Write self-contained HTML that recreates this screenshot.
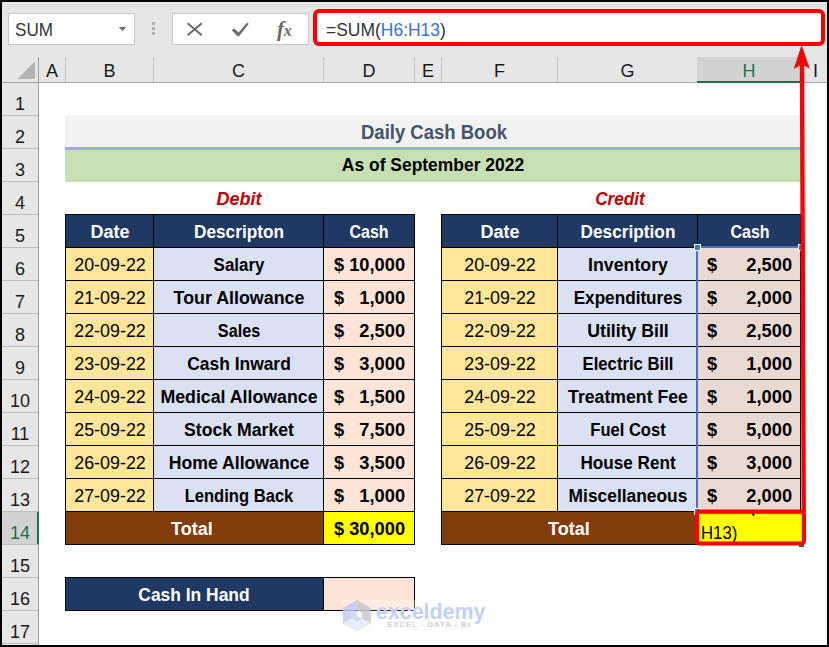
<!DOCTYPE html>
<html lang="en">
<head>
<meta charset="utf-8">
<title>Daily Cash Book</title>
<style>
html,body{margin:0;padding:0;background:#000;}
body{width:829px;height:647px;position:relative;overflow:hidden;font-family:"Liberation Sans",sans-serif;}
#win{position:absolute;left:0;top:0;width:829px;height:647px;overflow:hidden;}
#win div,#win span,#win svg{position:absolute;}
.t{white-space:nowrap;line-height:20px;height:20px;}
#chrome{left:2px;top:2px;width:825px;height:81px;background:#e6e6e6;}
#grid{left:39px;top:83px;width:788px;height:562px;background:#fff;}
#rowhdr{left:2px;top:83px;width:36px;height:562px;background:#e6e6e6;}
.rn{left:2px;width:36px;text-align:center;font-size:18px;line-height:20px;height:20px;color:#1a1a1a;}
.cl{top:60.76px;font-size:18px;line-height:20px;height:20px;color:#1a1a1a;transform:translateX(-50%);}
.vsep{top:57px;width:1px;height:25px;background:#c4c4c4;}
.hsep{left:2px;width:36px;height:1px;background:#bdbdbd;}
</style>
</head>
<body>
<div id="win">
<div id="chrome"></div>
<div id="grid"></div>
<div id="rowhdr"></div>
<div style="left:2px;top:2px;width:825px;height:7px;background:linear-gradient(#efefef 0,#e9e9e9 14%,#dfdfdf 40%,#e6e6e6 100%);"></div>
<div style="left:8px;top:13px;width:125px;height:30px;background:#fff;border:1px solid #c6c6c6;"></div>
<span class="t" style="left:14.5px;top:19.76px;font-size:18px;color:#333;transform-origin:0 50%;transform:scaleX(0.95)">SUM</span>
<svg style="left:118px;top:27px" width="10" height="6" viewBox="0 0 10 6"><path d="M0.8 0 L8.2 0 L4.5 4.3 Z" fill="#6e6e6e"/></svg>
<div style="left:152px;top:22px;width:3px;height:3px;background:#b2b2b2;"></div>
<div style="left:152px;top:27px;width:3px;height:3px;background:#b2b2b2;"></div>
<div style="left:152px;top:32px;width:3px;height:3px;background:#b2b2b2;"></div>
<div style="left:172px;top:13px;width:135px;height:30px;background:#fff;border:1px solid #c6c6c6;"></div>
<svg style="left:186px;top:20px" width="18" height="18" viewBox="0 0 18 18"><path d="M1.6 3.2 L15.8 15.3 M15.8 3.2 L1.6 15.3" stroke="#6a6a6a" stroke-width="2" fill="none"/></svg>
<svg style="left:230px;top:20px" width="20" height="18" viewBox="0 0 20 18"><path d="M1.8 10.2 L4.2 8.6 L8.6 12.6 L17.2 2.6 L18.8 3.8 L9 16.2 L7.6 16.2 Z" fill="#6a6a6a"/></svg>
<span class="t" style="left:277px;top:18.5px;font-family:'Liberation Serif',serif;font-style:italic;font-weight:bold;font-size:21px;color:#686868;letter-spacing:-0.3px">f<span style="position:static;font-size:16px">x</span></span>
<div style="left:312.5px;top:8.5px;width:504.5px;height:29px;background:#fff;border:4px solid #fa0000;border-radius:6px;"></div>
<span class="t" style="left:326px;top:19.5px;font-size:18px;color:#333;transform-origin:0 50%;transform:scaleX(0.97)">=SUM(<span style="position:static;color:#3b6fd1">H6:H13</span>)</span>
<div style="left:2px;top:82px;width:825px;height:1px;background:#a6a6a6;"></div>
<div class="vsep" style="left:38px"></div>
<div class="vsep" style="left:65px"></div>
<div class="vsep" style="left:153px"></div>
<div class="vsep" style="left:323px"></div>
<div class="vsep" style="left:414px"></div>
<div class="vsep" style="left:441px"></div>
<div class="vsep" style="left:557px"></div>
<div class="vsep" style="left:697px"></div>
<div class="vsep" style="left:800px"></div>
<div style="left:697px;top:57px;width:104px;height:24px;background:#d2d2d2;"></div>
<div style="left:697px;top:81px;width:104px;height:2px;background:#1e7145;"></div>
<span class="cl" style="left:52.0px;color:#1a1a1a">A</span>
<span class="cl" style="left:109.5px;color:#1a1a1a">B</span>
<span class="cl" style="left:238.5px;color:#1a1a1a">C</span>
<span class="cl" style="left:369.0px;color:#1a1a1a">D</span>
<span class="cl" style="left:428.0px;color:#1a1a1a">E</span>
<span class="cl" style="left:499.5px;color:#1a1a1a">F</span>
<span class="cl" style="left:627.5px;color:#1a1a1a">G</span>
<span class="cl" style="left:749.0px;color:#1e7145">H</span>
<span class="cl" style="left:815.5px">I</span>
<svg style="left:17px;top:61px" width="19" height="19" viewBox="0 0 19 19"><path d="M18 0.5 L18 18 L0.5 18 Z" fill="#b2b2b2"/></svg>
<div style="left:38px;top:57px;width:1px;height:588px;background:#a0a0a0;"></div>
<div class="hsep" style="top:115px"></div>
<span class="rn" style="top:93.76px;">1</span>
<div class="hsep" style="top:148px"></div>
<span class="rn" style="top:126.76px;">2</span>
<div class="hsep" style="top:181px"></div>
<span class="rn" style="top:159.76px;">3</span>
<div class="hsep" style="top:214px"></div>
<span class="rn" style="top:192.76px;">4</span>
<div class="hsep" style="top:247px"></div>
<span class="rn" style="top:225.76px;">5</span>
<div class="hsep" style="top:280px"></div>
<span class="rn" style="top:258.76px;">6</span>
<div class="hsep" style="top:313px"></div>
<span class="rn" style="top:291.76px;">7</span>
<div class="hsep" style="top:346px"></div>
<span class="rn" style="top:324.76px;">8</span>
<div class="hsep" style="top:379px"></div>
<span class="rn" style="top:357.76px;">9</span>
<div class="hsep" style="top:412px"></div>
<span class="rn" style="top:390.76px;">10</span>
<div class="hsep" style="top:445px"></div>
<span class="rn" style="top:423.76px;">11</span>
<div class="hsep" style="top:478px"></div>
<span class="rn" style="top:456.76px;">12</span>
<div class="hsep" style="top:511px"></div>
<span class="rn" style="top:489.76px;">13</span>
<div style="left:2px;top:512px;width:36px;height:32px;background:#d2d2d2;"></div>
<div style="left:37px;top:512px;width:2px;height:32px;background:#1e7145;"></div>
<div class="hsep" style="top:544px"></div>
<span class="rn" style="top:522.76px;color:#1e7145;">14</span>
<div class="hsep" style="top:577px"></div>
<span class="rn" style="top:555.76px;">15</span>
<div class="hsep" style="top:610px"></div>
<span class="rn" style="top:588.76px;">16</span>
<div class="hsep" style="top:643px"></div>
<span class="rn" style="top:621.76px;">17</span>
<div style="left:65px;top:115px;width:736px;height:32px;background:#f2f2f2;"></div>
<div style="left:65px;top:147px;width:736px;height:3px;background:#97aede;"></div>
<div style="left:65px;top:150px;width:736px;height:32px;background:#c6e0b4;"></div>
<div style="left:65px;top:214px;width:350px;height:331px;background:#000;"></div>
<div style="left:66px;top:215px;width:87px;height:32px;background:#203864;"></div>
<div style="left:154px;top:215px;width:169px;height:32px;background:#203864;"></div>
<div style="left:324px;top:215px;width:90px;height:32px;background:#203864;"></div>
<div style="left:66px;top:248px;width:87px;height:32px;background:#ffe699;"></div>
<div style="left:154px;top:248px;width:169px;height:32px;background:#d9e1f2;"></div>
<div style="left:324px;top:248px;width:90px;height:32px;background:#fce4d6;"></div>
<div style="left:66px;top:281px;width:87px;height:32px;background:#ffe699;"></div>
<div style="left:154px;top:281px;width:169px;height:32px;background:#d9e1f2;"></div>
<div style="left:324px;top:281px;width:90px;height:32px;background:#fce4d6;"></div>
<div style="left:66px;top:314px;width:87px;height:32px;background:#ffe699;"></div>
<div style="left:154px;top:314px;width:169px;height:32px;background:#d9e1f2;"></div>
<div style="left:324px;top:314px;width:90px;height:32px;background:#fce4d6;"></div>
<div style="left:66px;top:347px;width:87px;height:32px;background:#ffe699;"></div>
<div style="left:154px;top:347px;width:169px;height:32px;background:#d9e1f2;"></div>
<div style="left:324px;top:347px;width:90px;height:32px;background:#fce4d6;"></div>
<div style="left:66px;top:380px;width:87px;height:32px;background:#ffe699;"></div>
<div style="left:154px;top:380px;width:169px;height:32px;background:#d9e1f2;"></div>
<div style="left:324px;top:380px;width:90px;height:32px;background:#fce4d6;"></div>
<div style="left:66px;top:413px;width:87px;height:32px;background:#ffe699;"></div>
<div style="left:154px;top:413px;width:169px;height:32px;background:#d9e1f2;"></div>
<div style="left:324px;top:413px;width:90px;height:32px;background:#fce4d6;"></div>
<div style="left:66px;top:446px;width:87px;height:32px;background:#ffe699;"></div>
<div style="left:154px;top:446px;width:169px;height:32px;background:#d9e1f2;"></div>
<div style="left:324px;top:446px;width:90px;height:32px;background:#fce4d6;"></div>
<div style="left:66px;top:479px;width:87px;height:32px;background:#ffe699;"></div>
<div style="left:154px;top:479px;width:169px;height:32px;background:#d9e1f2;"></div>
<div style="left:324px;top:479px;width:90px;height:32px;background:#fce4d6;"></div>
<div style="left:66px;top:512px;width:257px;height:32px;background:#833c0b;"></div>
<div style="left:324px;top:512px;width:90px;height:32px;background:#ffff00;"></div>
<div style="left:441px;top:214px;width:360px;height:331px;background:#000;"></div>
<div style="left:442px;top:215px;width:115px;height:32px;background:#203864;"></div>
<div style="left:558px;top:215px;width:139px;height:32px;background:#203864;"></div>
<div style="left:698px;top:215px;width:102px;height:32px;background:#203864;"></div>
<div style="left:442px;top:248px;width:115px;height:32px;background:#ffe699;"></div>
<div style="left:558px;top:248px;width:139px;height:32px;background:#d9e1f2;"></div>
<div style="left:698px;top:248px;width:102px;height:32px;background:#e9d9d3;"></div>
<div style="left:442px;top:281px;width:115px;height:32px;background:#ffe699;"></div>
<div style="left:558px;top:281px;width:139px;height:32px;background:#d9e1f2;"></div>
<div style="left:698px;top:281px;width:102px;height:32px;background:#e9d9d3;"></div>
<div style="left:442px;top:314px;width:115px;height:32px;background:#ffe699;"></div>
<div style="left:558px;top:314px;width:139px;height:32px;background:#d9e1f2;"></div>
<div style="left:698px;top:314px;width:102px;height:32px;background:#e9d9d3;"></div>
<div style="left:442px;top:347px;width:115px;height:32px;background:#ffe699;"></div>
<div style="left:558px;top:347px;width:139px;height:32px;background:#d9e1f2;"></div>
<div style="left:698px;top:347px;width:102px;height:32px;background:#e9d9d3;"></div>
<div style="left:442px;top:380px;width:115px;height:32px;background:#ffe699;"></div>
<div style="left:558px;top:380px;width:139px;height:32px;background:#d9e1f2;"></div>
<div style="left:698px;top:380px;width:102px;height:32px;background:#e9d9d3;"></div>
<div style="left:442px;top:413px;width:115px;height:32px;background:#ffe699;"></div>
<div style="left:558px;top:413px;width:139px;height:32px;background:#d9e1f2;"></div>
<div style="left:698px;top:413px;width:102px;height:32px;background:#e9d9d3;"></div>
<div style="left:442px;top:446px;width:115px;height:32px;background:#ffe699;"></div>
<div style="left:558px;top:446px;width:139px;height:32px;background:#d9e1f2;"></div>
<div style="left:698px;top:446px;width:102px;height:32px;background:#e9d9d3;"></div>
<div style="left:442px;top:479px;width:115px;height:32px;background:#ffe699;"></div>
<div style="left:558px;top:479px;width:139px;height:32px;background:#d9e1f2;"></div>
<div style="left:698px;top:479px;width:102px;height:32px;background:#e9d9d3;"></div>
<div style="left:442px;top:512px;width:255px;height:32px;background:#833c0b;"></div>
<div style="left:65px;top:577px;width:350px;height:34px;background:#000;"></div>
<div style="left:66px;top:578px;width:257px;height:32px;background:#203864;"></div>
<div style="left:324px;top:578px;width:90px;height:32px;background:#fce4d6;"></div>
<span class="t" style="top:121.84px;font-size:19.5px;color:#44546a;font-weight:bold;left:433.80px;transform:translateX(-50%) scaleX(0.9487);">Daily Cash Book</span>
<span class="t" style="top:155.26px;font-size:18px;color:#000;font-weight:bold;left:433.30px;transform:translateX(-50%) scaleX(0.9698);">As of September 2022</span>
<span class="t" style="top:188.96px;font-size:18px;color:#c00000;font-weight:bold;font-style:italic;left:239.00px;transform:translateX(-50%) scaleX(0.9965);">Debit</span>
<span class="t" style="top:188.96px;font-size:18px;color:#c00000;font-weight:bold;font-style:italic;left:620.00px;transform:translateX(-50%) scaleX(0.9543);">Credit</span>
<span class="t" style="top:221.76px;font-size:18px;color:#fff;font-weight:bold;left:109.80px;transform:translateX(-50%) scaleX(1.0012);">Date</span>
<span class="t" style="top:221.76px;font-size:18px;color:#fff;font-weight:bold;left:238.80px;transform:translateX(-50%) scaleX(0.9563);">Descripton</span>
<span class="t" style="top:221.76px;font-size:18px;color:#fff;font-weight:bold;left:369.30px;transform:translateX(-50%) scaleX(0.8900);">Cash</span>
<span class="t" style="top:254.76px;font-size:18px;color:#000;left:109.80px;transform:translateX(-50%) scaleX(0.9922);">20-09-22</span>
<span class="t" style="top:254.76px;font-size:18px;color:#000;font-weight:bold;left:238.90px;transform:translateX(-50%) scaleX(0.9396);">Salary</span>
<span class="t" style="top:254.76px;font-size:18px;color:#000;font-weight:bold;left:334.00px;transform-origin:0 50%;transform:scaleX(1.0125);">$</span>
<span class="t" style="top:254.76px;font-size:18px;color:#000;font-weight:bold;right:424.20px;transform-origin:100% 50%;transform:scaleX(1.0142);">10,000</span>
<span class="t" style="top:287.76px;font-size:18px;color:#000;left:109.80px;transform:translateX(-50%) scaleX(0.9922);">21-09-22</span>
<span class="t" style="top:287.76px;font-size:18px;color:#000;font-weight:bold;left:238.90px;transform:translateX(-50%) scaleX(0.9908);">Tour Allowance</span>
<span class="t" style="top:287.76px;font-size:18px;color:#000;font-weight:bold;left:334.00px;transform-origin:0 50%;transform:scaleX(1.0125);">$</span>
<span class="t" style="top:287.76px;font-size:18px;color:#000;font-weight:bold;right:424.20px;transform-origin:100% 50%;transform:scaleX(1.0146);">1,000</span>
<span class="t" style="top:320.76px;font-size:18px;color:#000;left:109.80px;transform:translateX(-50%) scaleX(0.9922);">22-09-22</span>
<span class="t" style="top:320.76px;font-size:18px;color:#000;font-weight:bold;left:238.90px;transform:translateX(-50%) scaleX(0.8990);">Sales</span>
<span class="t" style="top:320.76px;font-size:18px;color:#000;font-weight:bold;left:334.00px;transform-origin:0 50%;transform:scaleX(1.0125);">$</span>
<span class="t" style="top:320.76px;font-size:18px;color:#000;font-weight:bold;right:424.20px;transform-origin:100% 50%;transform:scaleX(1.0146);">2,500</span>
<span class="t" style="top:353.76px;font-size:18px;color:#000;left:109.80px;transform:translateX(-50%) scaleX(0.9922);">23-09-22</span>
<span class="t" style="top:353.76px;font-size:18px;color:#000;font-weight:bold;left:238.90px;transform:translateX(-50%) scaleX(0.9679);">Cash Inward</span>
<span class="t" style="top:353.76px;font-size:18px;color:#000;font-weight:bold;left:334.00px;transform-origin:0 50%;transform:scaleX(1.0125);">$</span>
<span class="t" style="top:353.76px;font-size:18px;color:#000;font-weight:bold;right:424.20px;transform-origin:100% 50%;transform:scaleX(1.0146);">3,000</span>
<span class="t" style="top:386.76px;font-size:18px;color:#000;left:109.80px;transform:translateX(-50%) scaleX(0.9922);">24-09-22</span>
<span class="t" style="top:386.76px;font-size:18px;color:#000;font-weight:bold;left:238.90px;transform:translateX(-50%) scaleX(0.9859);">Medical Allowance</span>
<span class="t" style="top:386.76px;font-size:18px;color:#000;font-weight:bold;left:334.00px;transform-origin:0 50%;transform:scaleX(1.0125);">$</span>
<span class="t" style="top:386.76px;font-size:18px;color:#000;font-weight:bold;right:424.20px;transform-origin:100% 50%;transform:scaleX(1.0146);">1,500</span>
<span class="t" style="top:419.76px;font-size:18px;color:#000;left:109.80px;transform:translateX(-50%) scaleX(0.9922);">25-09-22</span>
<span class="t" style="top:419.76px;font-size:18px;color:#000;font-weight:bold;left:238.90px;transform:translateX(-50%) scaleX(0.9802);">Stock Market</span>
<span class="t" style="top:419.76px;font-size:18px;color:#000;font-weight:bold;left:334.00px;transform-origin:0 50%;transform:scaleX(1.0125);">$</span>
<span class="t" style="top:419.76px;font-size:18px;color:#000;font-weight:bold;right:424.20px;transform-origin:100% 50%;transform:scaleX(1.0146);">7,500</span>
<span class="t" style="top:452.76px;font-size:18px;color:#000;left:109.80px;transform:translateX(-50%) scaleX(0.9922);">26-09-22</span>
<span class="t" style="top:452.76px;font-size:18px;color:#000;font-weight:bold;left:238.90px;transform:translateX(-50%) scaleX(0.9808);">Home Allowance</span>
<span class="t" style="top:452.76px;font-size:18px;color:#000;font-weight:bold;left:334.00px;transform-origin:0 50%;transform:scaleX(1.0125);">$</span>
<span class="t" style="top:452.76px;font-size:18px;color:#000;font-weight:bold;right:424.20px;transform-origin:100% 50%;transform:scaleX(1.0146);">3,500</span>
<span class="t" style="top:485.76px;font-size:18px;color:#000;left:109.80px;transform:translateX(-50%) scaleX(0.9922);">27-09-22</span>
<span class="t" style="top:485.76px;font-size:18px;color:#000;font-weight:bold;left:238.90px;transform:translateX(-50%) scaleX(0.9210);">Lending Back</span>
<span class="t" style="top:485.76px;font-size:18px;color:#000;font-weight:bold;left:334.00px;transform-origin:0 50%;transform:scaleX(1.0125);">$</span>
<span class="t" style="top:485.76px;font-size:18px;color:#000;font-weight:bold;right:424.20px;transform-origin:100% 50%;transform:scaleX(1.0146);">1,000</span>
<span class="t" style="top:518.76px;font-size:18px;color:#fff;font-weight:bold;left:191.90px;transform:translateX(-50%) scaleX(1.0031);">Total</span>
<span class="t" style="top:518.76px;font-size:18px;color:#000;font-weight:bold;left:334.00px;transform-origin:0 50%;transform:scaleX(1.0125);">$</span>
<span class="t" style="top:518.76px;font-size:18px;color:#000;font-weight:bold;right:424.20px;transform-origin:100% 50%;transform:scaleX(1.0142);">30,000</span>
<span class="t" style="top:221.76px;font-size:18px;color:#fff;font-weight:bold;left:499.80px;transform:translateX(-50%) scaleX(1.0012);">Date</span>
<span class="t" style="top:221.76px;font-size:18px;color:#fff;font-weight:bold;left:627.80px;transform:translateX(-50%) scaleX(0.9583);">Description</span>
<span class="t" style="top:221.76px;font-size:18px;color:#fff;font-weight:bold;left:750.20px;transform:translateX(-50%) scaleX(0.8900);">Cash</span>
<span class="t" style="top:254.76px;font-size:18px;color:#000;left:499.80px;transform:translateX(-50%) scaleX(0.9922);">20-09-22</span>
<span class="t" style="top:254.76px;font-size:18px;color:#000;font-weight:bold;left:627.90px;transform:translateX(-50%) scaleX(0.9853);">Inventory</span>
<span class="t" style="top:254.76px;font-size:18px;color:#000;font-weight:bold;left:707.30px;transform-origin:0 50%;transform:scaleX(1.0125);">$</span>
<span class="t" style="top:254.76px;font-size:18px;color:#000;font-weight:bold;right:37.30px;transform-origin:100% 50%;transform:scaleX(1.0146);">2,500</span>
<span class="t" style="top:287.76px;font-size:18px;color:#000;left:499.80px;transform:translateX(-50%) scaleX(0.9922);">21-09-22</span>
<span class="t" style="top:287.76px;font-size:18px;color:#000;font-weight:bold;left:627.90px;transform:translateX(-50%) scaleX(0.9535);">Expenditures</span>
<span class="t" style="top:287.76px;font-size:18px;color:#000;font-weight:bold;left:707.30px;transform-origin:0 50%;transform:scaleX(1.0125);">$</span>
<span class="t" style="top:287.76px;font-size:18px;color:#000;font-weight:bold;right:37.30px;transform-origin:100% 50%;transform:scaleX(1.0146);">2,000</span>
<span class="t" style="top:320.76px;font-size:18px;color:#000;left:499.80px;transform:translateX(-50%) scaleX(0.9922);">22-09-22</span>
<span class="t" style="top:320.76px;font-size:18px;color:#000;font-weight:bold;left:627.90px;transform:translateX(-50%) scaleX(0.9814);">Utility Bill</span>
<span class="t" style="top:320.76px;font-size:18px;color:#000;font-weight:bold;left:707.30px;transform-origin:0 50%;transform:scaleX(1.0125);">$</span>
<span class="t" style="top:320.76px;font-size:18px;color:#000;font-weight:bold;right:37.30px;transform-origin:100% 50%;transform:scaleX(1.0146);">2,500</span>
<span class="t" style="top:353.76px;font-size:18px;color:#000;left:499.80px;transform:translateX(-50%) scaleX(0.9922);">23-09-22</span>
<span class="t" style="top:353.76px;font-size:18px;color:#000;font-weight:bold;left:627.90px;transform:translateX(-50%) scaleX(0.9272);">Electric Bill</span>
<span class="t" style="top:353.76px;font-size:18px;color:#000;font-weight:bold;left:707.30px;transform-origin:0 50%;transform:scaleX(1.0125);">$</span>
<span class="t" style="top:353.76px;font-size:18px;color:#000;font-weight:bold;right:37.30px;transform-origin:100% 50%;transform:scaleX(1.0146);">1,000</span>
<span class="t" style="top:386.76px;font-size:18px;color:#000;left:499.80px;transform:translateX(-50%) scaleX(0.9922);">24-09-22</span>
<span class="t" style="top:386.76px;font-size:18px;color:#000;font-weight:bold;left:627.90px;transform:translateX(-50%) scaleX(0.9818);">Treatment Fee</span>
<span class="t" style="top:386.76px;font-size:18px;color:#000;font-weight:bold;left:707.30px;transform-origin:0 50%;transform:scaleX(1.0125);">$</span>
<span class="t" style="top:386.76px;font-size:18px;color:#000;font-weight:bold;right:37.30px;transform-origin:100% 50%;transform:scaleX(1.0146);">1,000</span>
<span class="t" style="top:419.76px;font-size:18px;color:#000;left:499.80px;transform:translateX(-50%) scaleX(0.9922);">25-09-22</span>
<span class="t" style="top:419.76px;font-size:18px;color:#000;font-weight:bold;left:627.90px;transform:translateX(-50%) scaleX(0.9200);">Fuel Cost</span>
<span class="t" style="top:419.76px;font-size:18px;color:#000;font-weight:bold;left:707.30px;transform-origin:0 50%;transform:scaleX(1.0125);">$</span>
<span class="t" style="top:419.76px;font-size:18px;color:#000;font-weight:bold;right:37.30px;transform-origin:100% 50%;transform:scaleX(1.0146);">5,000</span>
<span class="t" style="top:452.76px;font-size:18px;color:#000;left:499.80px;transform:translateX(-50%) scaleX(0.9922);">26-09-22</span>
<span class="t" style="top:452.76px;font-size:18px;color:#000;font-weight:bold;left:627.90px;transform:translateX(-50%) scaleX(0.9517);">House Rent</span>
<span class="t" style="top:452.76px;font-size:18px;color:#000;font-weight:bold;left:707.30px;transform-origin:0 50%;transform:scaleX(1.0125);">$</span>
<span class="t" style="top:452.76px;font-size:18px;color:#000;font-weight:bold;right:37.30px;transform-origin:100% 50%;transform:scaleX(1.0146);">3,000</span>
<span class="t" style="top:485.76px;font-size:18px;color:#000;left:499.80px;transform:translateX(-50%) scaleX(0.9922);">27-09-22</span>
<span class="t" style="top:485.76px;font-size:18px;color:#000;font-weight:bold;left:627.90px;transform:translateX(-50%) scaleX(0.9653);">Miscellaneous</span>
<span class="t" style="top:485.76px;font-size:18px;color:#000;font-weight:bold;left:707.30px;transform-origin:0 50%;transform:scaleX(1.0125);">$</span>
<span class="t" style="top:485.76px;font-size:18px;color:#000;font-weight:bold;right:37.30px;transform-origin:100% 50%;transform:scaleX(1.0146);">2,000</span>
<span class="t" style="top:518.76px;font-size:18px;color:#fff;font-weight:bold;left:569.40px;transform:translateX(-50%) scaleX(1.0031);">Total</span>
<span class="t" style="top:584.76px;font-size:18px;color:#fff;font-weight:bold;left:194.10px;transform:translateX(-50%) scaleX(0.9677);">Cash In Hand</span>
<div style="left:696px;top:246px;width:105px;height:2px;background:#4472c4;"></div>
<div style="left:696px;top:246px;width:2px;height:266px;background:#4472c4;"></div>
<div style="left:694px;top:244px;width:5px;height:5px;background:#4472c4;border:1px solid #fff;"></div>
<div style="left:798px;top:244px;width:5px;height:5px;background:#4472c4;border:1px solid #fff;"></div>
<div style="left:694px;top:508px;width:5px;height:5px;background:#4472c4;border:1px solid #fff;"></div>
<div style="left:698px;top:512px;width:104px;height:32px;background:#ffff00;"></div>
<span class="t" style="left:700.7px;top:522.76px;font-size:18px;color:#000;transform-origin:0 50%;transform:scaleX(0.93)">H13)</span>
<div style="left:752px;top:512px;width:2px;height:4px;background:#222;transform:rotate(-30deg)"></div>
<div style="left:799px;top:544px;width:5px;height:3px;background:#1e7145;"></div>
<svg style="left:690px;top:505px" width="120" height="45" viewBox="690 505 120 45"><rect x="697" y="511.6" width="106.9" height="31.9" rx="2.5" fill="none" stroke="#fa0000" stroke-width="4.2"/></svg>
<svg style="left:780px;top:40px" width="40" height="480" viewBox="780 40 40 480"><path d="M801.6 45 L809.8 69 L804.2 65.5 L805.9 512 L801.6 512 L799.8 65.5 L793.8 69 Z" fill="#fa0000"/></svg>
<div style="left:343px;top:600px;width:142px;height:31px;background:rgba(255,255,255,0.3);"></div>
<div style="left:343px;top:610px;width:72px;height:1px;background:#1a1a1a;"></div>
<svg style="left:343px;top:600px;opacity:0.82" width="28" height="32" viewBox="0 0 27.2 31"><path d="M13.5 0 L0 7.6 L0 22.8 L8.4 18 L8.4 12.6 L13.5 9.6 Z" fill="#bccaf4"/><path d="M13.5 0 L27 7.6 L27 22.8 L18.6 18 L18.6 12.6 L13.5 9.6 Z" fill="#c8c8cc"/><path d="M0 22.8 L13.5 30.8 L27 22.8 L18.6 18 L13.5 21 L8.4 18 Z" fill="#e2e8f3"/><path d="M8.4 12.6 L13.5 9.6 L13.5 15.6 L8.4 18 Z" fill="#d0d2d6"/><path d="M13.5 9.6 L18.6 12.6 L18.6 18 L13.5 15.6 Z" fill="#f3f5fa"/><path d="M8.4 18 L13.5 15.6 L18.6 18 L13.5 21 Z" fill="#c4d0f5"/></svg>
<span class="t" style="left:375.5px;top:596.9px;font-size:22.5px;line-height:30px;height:30px;font-weight:bold;color:#c3d1f4;transform-origin:0 50%;transform:scaleX(0.95)">exceldemy</span>
<span class="t" style="left:387px;top:619.2px;font-size:8px;line-height:12px;height:12px;font-weight:bold;color:#cdd0d4;letter-spacing:0.84px">EXCEL - DATA - BI</span>
</div>
</body>
</html>
